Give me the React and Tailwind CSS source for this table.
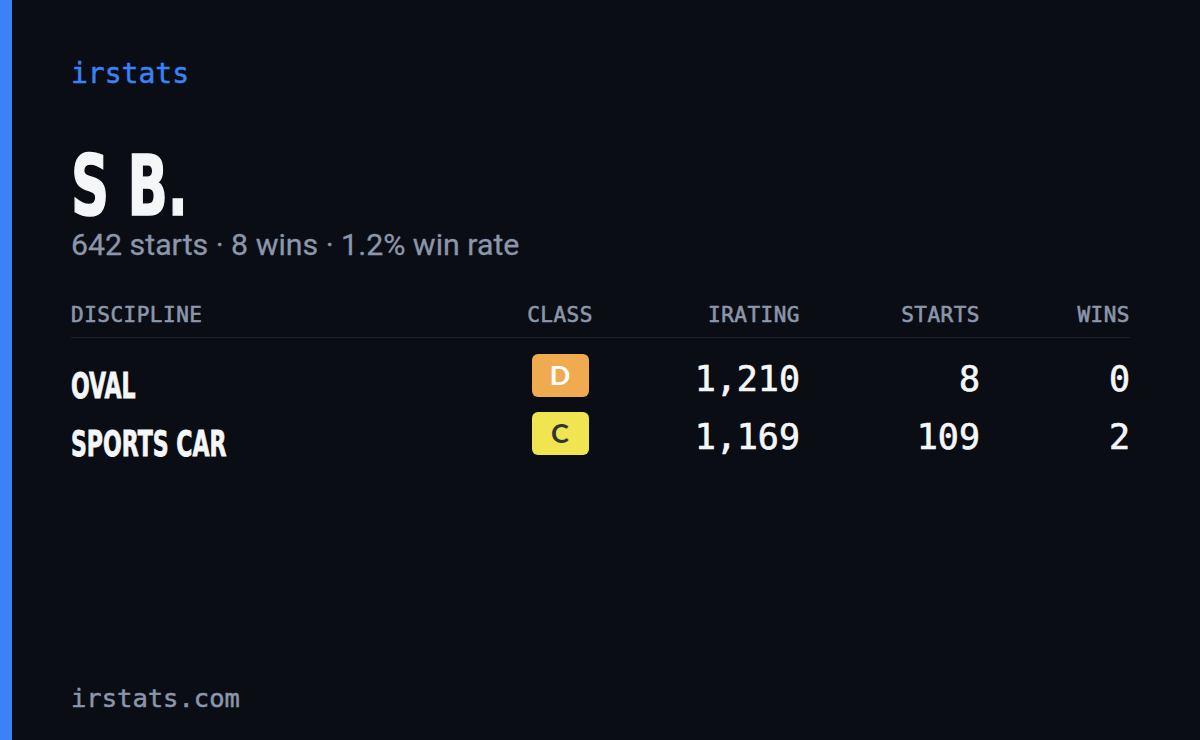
const mono = { fontFamily: '"DejaVu Sans Mono", "Liberation Mono", monospace' };

function Cond({ children, className = "" }) {
  return (
    <span
      className={"inline-block origin-left scale-x-[0.7] font-bold whitespace-nowrap " + className}
      style={{ fontFamily: '"Liberation Sans Narrow", "DejaVu Sans Condensed", "Liberation Sans", sans-serif' }}
    >
      {children}
    </span>
  );
}

const rows = [
  { name: "OVAL", cls: "D", badge: "bg-[#f0aa50] text-white", ir: "1,210", starts: "8", wins: "0" },
  { name: "SPORTS CAR", cls: "C", badge: "bg-[#f0e450] text-[#333333]", ir: "1,169", starts: "109", wins: "2" },
];

export default function App() {
  return (
    <div className="flex h-[740px] w-[1200px] overflow-hidden bg-[#0a0d14]">
      <div className="w-[12px] shrink-0 bg-[#3b82f6]" />
      <div className="flex flex-1 flex-col pl-[59px] pr-[70px] pt-[58px] pb-[27px]">
        <div className="text-[28px] leading-[32px] text-[#3b82f6] [-webkit-text-stroke:0.5px_#3b82f6]" style={mono}>
          irstats
        </div>
        <div className="mt-[51px] h-[84px] text-[84px] leading-[84px] text-[#f5f6f8]">
          <Cond className="[-webkit-text-stroke:1.6px_#f5f6f8]">S B.</Cond>
        </div>
        <div
          className="mt-[2px] text-[30.3px] leading-[36px] text-[#8b96ab] [-webkit-text-stroke:0.3px_#8b96ab]"
          style={{ fontFamily: 'Roboto, "Noto Sans", sans-serif' }}
        >
          642 starts · 8 wins · 1.2% win rate
        </div>

        <div
          className="mt-[40px] grid grid-cols-[429px_120px_180px_180px_150px] border-b border-[#1c2030] pb-[10px] text-[21px] leading-[24px] tracking-[0.5px] text-[#8b96ab] [-webkit-text-stroke:0.6px_#8b96ab]"
          style={mono}
        >
          <div>DISCIPLINE</div>
          <div className="text-center">CLASS</div>
          <div className="text-right">IRATING</div>
          <div className="text-right">STARTS</div>
          <div className="text-right">WINS</div>
        </div>

        <div className="mt-[16px] flex flex-col">
          {rows.map((r) => (
            <div key={r.name} className="grid h-[58px] grid-cols-[429px_120px_180px_180px_150px] items-start">
              <div className="pt-[11px] text-[35px] leading-[39px] text-[#f5f6f8]">
                <Cond className="[-webkit-text-stroke:0.8px_#f5f6f8]">{r.name}</Cond>
              </div>
              <div className="flex justify-center">
                <div
                  className={"flex h-[43px] w-[57px] items-center justify-center rounded-[6px] text-[27px] font-bold " + r.badge}
                  style={{ fontFamily: 'Lato, "Open Sans", sans-serif' }}
                >
                  {r.cls}
                </div>
              </div>
              <div className="pt-[5px] text-right text-[35px] leading-[41px] text-[#f5f6f8] [-webkit-text-stroke:0.7px_#f5f6f8]" style={mono}>
                {r.ir}
              </div>
              <div className="pt-[5px] text-right text-[35px] leading-[41px] text-[#f5f6f8] [-webkit-text-stroke:0.7px_#f5f6f8]" style={mono}>
                {r.starts}
              </div>
              <div className="pt-[5px] text-right text-[35px] leading-[41px] text-[#f5f6f8] [-webkit-text-stroke:0.7px_#f5f6f8]" style={mono}>
                {r.wins}
              </div>
            </div>
          ))}
        </div>

        <div className="mt-auto text-[25.5px] leading-[30px] text-[#8b96ab] [-webkit-text-stroke:0.5px_#8b96ab]" style={mono}>
          irstats.com
        </div>
      </div>
    </div>
  );
}
